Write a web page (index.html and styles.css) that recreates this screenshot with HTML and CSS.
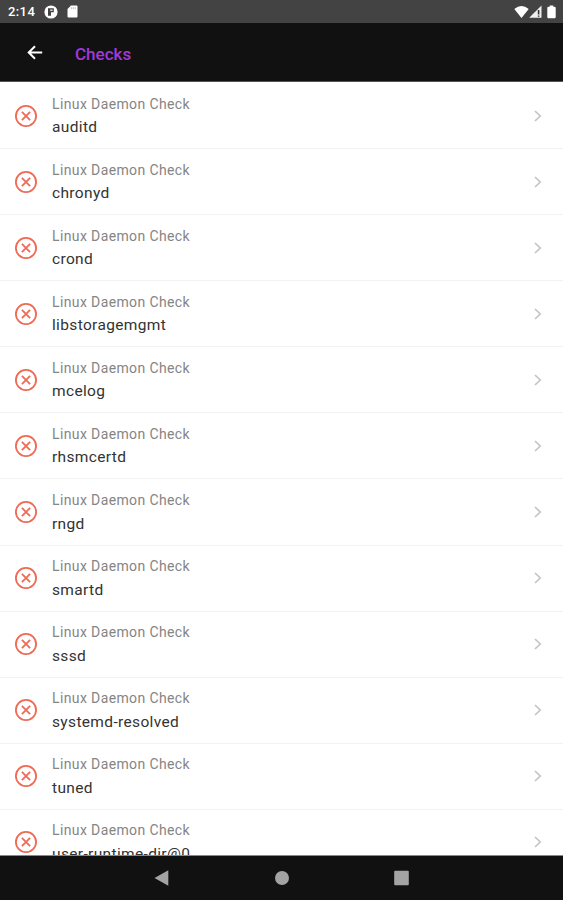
FILE: index.html
```html
<!DOCTYPE html>
<html lang="en">
<head>
    <meta charset="UTF-8">
    <meta name="viewport" content="width=device-width, initial-scale=1.0">
    <title>Checks</title>
    <link rel="stylesheet" href="styles.css">
</head>
<body>
    <svg width="0" height="0" class="symbols">
        <symbol id="fail" viewBox="0 0 24 24">
            <circle cx="12" cy="12" r="10.1"/>
            <path d="M7.9 7.9l8.2 8.2M16.1 7.9l-8.2 8.2"/>
        </symbol>
        <symbol id="chevron" viewBox="0 0 10 14">
            <path d="M2 2l5.2 5L2 12"/>
        </symbol>
    </svg>

    <div class="status-bar">
        <span class="clock">2:14</span>
        <svg class="app-icon" width="14" height="14" viewBox="0 0 14 14">
            <circle cx="7" cy="7" r="6.6" fill="#fff"/>
            <path d="M4 3.3h5.8v4H7v3.4H4z" fill="#434343"/>
            <path d="M6.2 5.2h2.4" stroke="#fff" stroke-width="1.2"/>
        </svg>
        <svg class="sd-icon" width="11" height="13" viewBox="0 0 11 13">
            <path d="M4 .5h5.5q1 0 1 1v10q0 1-1 1h-8q-1 0-1-1V4z" fill="#fff"/>
            <path d="M4.2 2.2v2M6.2 2.2v2M8.2 2.2v2" stroke="#aaa" stroke-width=".8"/>
        </svg>
        <div class="status-right">
            <svg width="15" height="14" viewBox="0 0 15 14">
                <path d="M.3 4Q7.5-2 14.7 4L7.5 13z" fill="#fff"/>
            </svg>
            <svg width="13" height="14" viewBox="0 0 13 14">
                <path d="M12.5.5v12.3H.2z" fill="#eee"/>
                <path d="M9.6 5v4.6M9.6 10.6v1.2" stroke="#333" stroke-width="1.6"/>
            </svg>
            <svg class="battery" width="9" height="14" viewBox="0 0 9 14">
                <path d="M2.7.4h3.6v1.4h1.2q1.2 0 1.2 1.2v9q0 1.3-1.2 1.3h-6Q.3 13.3.3 12V3q0-1.2 1.2-1.2h1.2z" fill="#fff"/>
            </svg>
        </div>
    </div>

    <header>
        <svg class="back" width="16" height="15" viewBox="0 0 16 15">
            <path d="M15.2 7.5H1.7M8 1.2L1.7 7.5 8 13.8"/>
        </svg>
        <h1>Checks</h1>
    </header>

    <main>
        <div class="check">
            <svg class="fail"><use href="#fail"/></svg>
            <div class="info"><p class="type">Linux Daemon Check</p><p class="name">auditd</p></div>
            <svg class="chevron"><use href="#chevron"/></svg>
        </div>
        <div class="check">
            <svg class="fail"><use href="#fail"/></svg>
            <div class="info"><p class="type">Linux Daemon Check</p><p class="name">chronyd</p></div>
            <svg class="chevron"><use href="#chevron"/></svg>
        </div>
        <div class="check">
            <svg class="fail"><use href="#fail"/></svg>
            <div class="info"><p class="type">Linux Daemon Check</p><p class="name">crond</p></div>
            <svg class="chevron"><use href="#chevron"/></svg>
        </div>
        <div class="check">
            <svg class="fail"><use href="#fail"/></svg>
            <div class="info"><p class="type">Linux Daemon Check</p><p class="name">libstoragemgmt</p></div>
            <svg class="chevron"><use href="#chevron"/></svg>
        </div>
        <div class="check">
            <svg class="fail"><use href="#fail"/></svg>
            <div class="info"><p class="type">Linux Daemon Check</p><p class="name">mcelog</p></div>
            <svg class="chevron"><use href="#chevron"/></svg>
        </div>
        <div class="check">
            <svg class="fail"><use href="#fail"/></svg>
            <div class="info"><p class="type">Linux Daemon Check</p><p class="name">rhsmcertd</p></div>
            <svg class="chevron"><use href="#chevron"/></svg>
        </div>
        <div class="check">
            <svg class="fail"><use href="#fail"/></svg>
            <div class="info"><p class="type">Linux Daemon Check</p><p class="name">rngd</p></div>
            <svg class="chevron"><use href="#chevron"/></svg>
        </div>
        <div class="check">
            <svg class="fail"><use href="#fail"/></svg>
            <div class="info"><p class="type">Linux Daemon Check</p><p class="name">smartd</p></div>
            <svg class="chevron"><use href="#chevron"/></svg>
        </div>
        <div class="check">
            <svg class="fail"><use href="#fail"/></svg>
            <div class="info"><p class="type">Linux Daemon Check</p><p class="name">sssd</p></div>
            <svg class="chevron"><use href="#chevron"/></svg>
        </div>
        <div class="check">
            <svg class="fail"><use href="#fail"/></svg>
            <div class="info"><p class="type">Linux Daemon Check</p><p class="name">systemd-resolved</p></div>
            <svg class="chevron"><use href="#chevron"/></svg>
        </div>
        <div class="check">
            <svg class="fail"><use href="#fail"/></svg>
            <div class="info"><p class="type">Linux Daemon Check</p><p class="name">tuned</p></div>
            <svg class="chevron"><use href="#chevron"/></svg>
        </div>
        <div class="check">
            <svg class="fail"><use href="#fail"/></svg>
            <div class="info"><p class="type">Linux Daemon Check</p><p class="name">user-runtime-dir@0</p></div>
            <svg class="chevron"><use href="#chevron"/></svg>
        </div>
    </main>

    <nav>
        <svg width="16" height="18" viewBox="0 0 16 18"><path d="M14.3 1.2v15.6L.5 9z"/></svg>
        <svg width="16" height="16" viewBox="0 0 16 16"><circle cx="8" cy="8" r="7"/></svg>
        <svg width="16" height="16" viewBox="0 0 16 16"><rect x=".2" y=".7" width="14.6" height="14.6" rx="1"/></svg>
    </nav>
</body>
</html>
```

FILE: styles.css
```css
* {
    box-sizing: border-box;
}
body {
    margin: 0;
    height: 900px;
    display: flex;
    flex-direction: column;
    overflow: hidden;
    background-color: #fff;
    font-family: Roboto, "Liberation Sans", sans-serif;
}
h1, p {
    margin: 0;
}
svg {
    display: block;
    flex-shrink: 0;
}
.symbols {
    display: none;
}

.status-bar {
    display: flex;
    align-items: center;
    height: 23px;
    flex-shrink: 0;
    padding: 0 7px 0 8px;
    background-color: #434343;
    color: #fff;
}
.clock {
    width: 36px;
    font-size: 13px;
    font-weight: 500;
    letter-spacing: 0.4px;
}
.sd-icon {
    margin-left: 9px;
}
.status-right {
    display: flex;
    margin-left: auto;
}
.battery {
    margin-left: 5px;
}

header {
    display: flex;
    align-items: center;
    height: 59px;
    flex-shrink: 0;
    padding: 1px 0 0 27px;
    background-color: #111;
    border-bottom: 1px solid #555;
}
.back {
    fill: none;
    stroke: #fff;
    stroke-width: 2;
}
header h1 {
    margin: 2px 0 0 32px;
    color: #a238dc;
    font-size: 17px;
    font-weight: 500;
}

main {
    flex: 1;
    min-height: 0;
    padding-top: 1px;
    overflow: hidden;
}
.check {
    display: flex;
    align-items: center;
    height: 66.08px;
    padding: 0 20px 0 14px;
    border-bottom: 1px solid #f2f2f2;
}
.fail {
    width: 24px;
    height: 24px;
    fill: none;
    stroke: #ee6a55;
    stroke-width: 1.8;
}
.info {
    flex: 1;
    margin-left: 14px;
    padding-top: 1px;
}
.type,
.name {
    line-height: 23.5px;
}
.type {
    color: #858585;
    font-size: 14px;
    letter-spacing: 0.38px;
}
.name {
    color: #333;
    font-size: 15.5px;
    letter-spacing: 0.35px;
}
.chevron {
    width: 10px;
    height: 14px;
    fill: none;
    stroke: #c4c4c4;
    stroke-width: 1.7;
}

nav {
    display: flex;
    justify-content: center;
    align-items: center;
    gap: 104px;
    height: 45px;
    flex-shrink: 0;
    background-color: #111;
    border-top: 1px solid #888;
    fill: #a3a3a3;
}
```
